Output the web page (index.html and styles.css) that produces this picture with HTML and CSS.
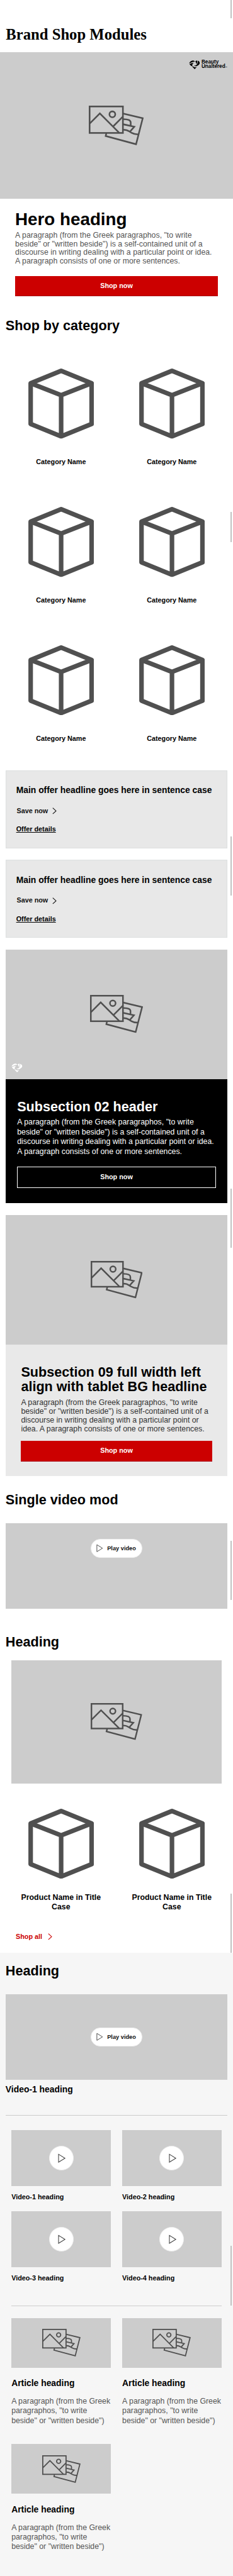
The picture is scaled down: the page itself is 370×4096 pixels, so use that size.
FILE: index.html
```html
<!DOCTYPE html>
<html lang="en">
<head>
<meta charset="utf-8">
<title>Brand Shop Modules</title>
<link rel="stylesheet" href="styles.css">
</head>
<body>
<svg class="sprite" aria-hidden="true">
  <symbol id="photos" viewBox="40 55 338 242" preserveAspectRatio="none">
    <g fill="none" stroke="#505050" stroke-width="10">
      <rect x="45" y="60" width="205" height="162"/>
      <path d="M46 164 108 102 228 222M190 182 250 122"/>
      <circle cx="185" cy="108" r="18"/>
      <path d="M250 103 372 132 331 291 144 241 148 224"/>
      <path d="M252 138C280 138 298 142 298 158V176M252 169 320 184 295 212M252 202C285 202 285 213 303 221C315 228 330 232 348 231"/>
    </g>
  </symbol>
  <symbol id="cube" viewBox="0 0 135 144.5">
    <path d="M67.5 4.8 130.2 30.2V114.3L67.5 139.7 4.8 114.3V30.2ZM4.8 30.2 67.5 54.8 130.2 30.2M67.5 54.8V139.7" fill="none" stroke="#505050" stroke-width="9.4" stroke-linejoin="round"/>
  </symbol>
  <symbol id="heart" viewBox="0 0 23 19">
    <path fill="currentColor" d="M.3 6.8C.8 3 4.8 0 9 .3 10.8.6 11.8 1.5 12.6 2.8 9 3.2 5 4 .3 6.8Z"/>
    <path fill="currentColor" d="M.8 8C4 6 7.5 5 9.6 5.5 7.2 6.8 6.6 8.8 7 11.6L5.5 12.2C3.5 10.8 1.5 9.5.8 8Z"/>
    <path fill="currentColor" d="M13.3 2.6C13.5 1.4 15 .2 17 .3 17.6 3 17.5 6 15.6 8.2 15.5 5.8 14.6 4 13.3 2.6Z"/>
    <path fill="currentColor" d="M18.3.6C21 1.3 23.3 4 22.7 6.6 21.5 9.2 18 11.8 14.8 12.3 12.5 12.5 11 11.6 10.3 10.6 14.5 11.8 19 8.5 18.3.6Z"/>
    <path fill="currentColor" d="M6.4 12.9 8.3 12.3C9.3 14 11.5 14.9 14.2 14.5 15.3 14.3 16 14 16.6 13.8L11.8 18.7Z"/>
  </symbol>
  <symbol id="chevron" viewBox="0 0 9 14">
    <path d="M1 .8 7.8 7 1 13.2" fill="none" stroke="currentColor" stroke-width="1.4"/>
  </symbol>
  <symbol id="play" viewBox="0 0 15 18">
    <path d="M1.2 1.3 13.6 9 1.2 16.7Z" fill="none" stroke="#444" stroke-width="1.3"/>
  </symbol>
</svg>

<header class="page-head"><h1>Brand Shop Modules</h1></header>

<section class="hero">
  <div class="photo photo-hero">
    <svg class="photo-icon icon-hero"><use href="#photos"/></svg>
    <div class="brand"><svg class="heart"><use href="#heart"/></svg><span class="brand-name">Beauty<br>Unaltered<small>™</small></span></div>
  </div>
  <div class="hero-copy">
    <h2>Hero heading</h2>
    <p>A paragraph (from the Greek paragraphos, "to write beside" or "written beside") is a self-contained unit of a discourse in writing dealing with a particular point or idea. A paragraph consists of one or more sentences.</p>
    <a class="btn">Shop now</a>
  </div>
</section>

<section class="categories">
  <h2 class="title">Shop by category</h2>
  <div class="cat-grid">
    <div class="cat"><svg class="cube"><use href="#cube"/></svg><span>Category Name</span></div>
    <div class="cat"><svg class="cube"><use href="#cube"/></svg><span>Category Name</span></div>
    <div class="cat"><svg class="cube"><use href="#cube"/></svg><span>Category Name</span></div>
    <div class="cat"><svg class="cube"><use href="#cube"/></svg><span>Category Name</span></div>
    <div class="cat"><svg class="cube"><use href="#cube"/></svg><span>Category Name</span></div>
    <div class="cat"><svg class="cube"><use href="#cube"/></svg><span>Category Name</span></div>
  </div>
</section>

<section class="offers">
  <div class="offer">
    <h3>Main offer headline goes here in sentence case</h3>
    <a class="save">Save now<svg class="chevron"><use href="#chevron"/></svg></a>
    <a class="details">Offer details</a>
  </div>
  <div class="offer">
    <h3>Main offer headline goes here in sentence case</h3>
    <a class="save">Save now<svg class="chevron"><use href="#chevron"/></svg></a>
    <a class="details">Offer details</a>
  </div>
</section>

<section class="sub sub-dark">
  <div class="photo photo-sub">
    <svg class="photo-icon icon-dark"><use href="#photos"/></svg>
    <svg class="heart heart-white"><use href="#heart"/></svg>
  </div>
  <div class="sub-copy">
    <h2>Subsection 02 header</h2>
    <p>A paragraph (from the Greek paragraphos, "to write beside" or "written beside") is a self-contained unit of a discourse in writing dealing with a particular point or idea. A paragraph consists of one or more sentences.</p>
    <a class="btn-outline">Shop now</a>
  </div>
</section>

<section class="sub sub-light">
  <div class="photo photo-sub"><svg class="photo-icon icon-sub"><use href="#photos"/></svg></div>
  <div class="sub-copy">
    <h2>Subsection 09 full width left align with tablet BG headline</h2>
    <p>A paragraph (from the Greek paragraphos, "to write beside" or "written beside") is a self-contained unit of a discourse in writing dealing with a particular point or idea. A paragraph consists of one or more sentences.</p>
    <a class="btn">Shop now</a>
  </div>
</section>

<section class="single-video">
  <h2 class="title">Single video mod</h2>
  <div class="video video-top"><a class="pill"><svg class="play"><use href="#play"/></svg>Play video</a></div>
</section>

<section class="products">
  <h2 class="title">Heading</h2>
  <div class="photo photo-products"><svg class="photo-icon icon-products"><use href="#photos"/></svg></div>
  <div class="product-grid">
    <div class="product"><svg class="cube"><use href="#cube"/></svg><span>Product Name in Title Case</span></div>
    <div class="product"><svg class="cube"><use href="#cube"/></svg><span>Product Name in Title Case</span></div>
  </div>
  <a class="shop-all">Shop all<svg class="chevron"><use href="#chevron"/></svg></a>
</section>

<section class="media">
  <h2 class="title">Heading</h2>
  <div class="video"><a class="pill"><svg class="play"><use href="#play"/></svg>Play video</a></div>
  <h3 class="video-title">Video-1 heading</h3>
  <hr>
  <div class="tiles">
    <div class="tile"><div class="thumb"><a class="disc"><svg><use href="#play"/></svg></a></div><h4>Video-1 heading</h4></div>
    <div class="tile"><div class="thumb"><a class="disc"><svg><use href="#play"/></svg></a></div><h4>Video-2 heading</h4></div>
    <div class="tile"><div class="thumb"><a class="disc"><svg><use href="#play"/></svg></a></div><h4>Video-3 heading</h4></div>
    <div class="tile"><div class="thumb"><a class="disc"><svg><use href="#play"/></svg></a></div><h4>Video-4 heading</h4></div>
  </div>
  <hr class="inset">
  <div class="articles">
    <article><div class="photo photo-article"><svg class="photo-icon icon-article"><use href="#photos"/></svg></div><h3>Article heading</h3><p>A paragraph (from the Greek paragraphos, "to write beside" or "written beside")</p></article>
    <article><div class="photo photo-article"><svg class="photo-icon icon-article"><use href="#photos"/></svg></div><h3>Article heading</h3><p>A paragraph (from the Greek paragraphos, "to write beside" or "written beside")</p></article>
    <article><div class="photo photo-article"><svg class="photo-icon icon-article"><use href="#photos"/></svg></div><h3>Article heading</h3><p>A paragraph (from the Greek paragraphos, "to write beside" or "written beside")</p></article>
  </div>
</section>

<!-- scroll thumbs laid over the right edge of the page -->
<i class="thumb-bar bar-1"></i>
<i class="thumb-bar bar-2"></i>
<i class="thumb-bar bar-3"></i>
<i class="thumb-bar bar-4"></i>
<i class="thumb-bar bar-5"></i>
<i class="thumb-bar bar-6"></i>
<i class="thumb-bar bar-7"></i>
</body>
</html>
```

FILE: styles.css
```css
* { box-sizing: border-box; }

/* 1rem is one hundred design units */
html { background: #fff; font-size: 77.17px; }

body {
  position: relative;
  height: 4096px;
  overflow: hidden;
  margin: 0;
  color: #000;
  font-family: "Liberation Sans", Arial, sans-serif;
  font-size: .16rem;
}

h1, h2, h3, h4, p { margin: 0; }
svg { display: block; flex: none; }
.sprite { position: absolute; width: 0; height: 0; }

/* Header */
.page-head { height: 1.07rem; padding: .53rem .12rem 0; }
.page-head h1 { font: bold .32rem/.36rem "Liberation Serif", "Times New Roman", serif; }

/* Shared pieces */
.title { padding-left: .115rem; font-size: .28rem; line-height: .34rem; }

.photo {
  position: relative;
  display: flex;
  align-items: center;
  justify-content: center;
  background: #ccc;
}
.photo-hero { height: 3.02rem; }
.photo-sub { height: 2.67rem; }
.photo-products { height: 2.542rem; margin: .2rem .235rem 0; }
.photo-article { height: 1.025rem; }
.icon-hero { width: 1.13rem; height: .815rem; }
.icon-dark { width: 1.09rem; height: .785rem; }
.icon-sub { width: 1.07rem; height: .77rem; }
.icon-products { width: 1.06rem; height: .76rem; }
.icon-article { width: .79rem; height: .57rem; }

.cube { width: 1.35rem; height: 1.445rem; }
.heart { width: .23rem; height: .185rem; }
.chevron { width: .09rem; height: .14rem; }

.btn {
  display: block;
  height: .42rem;
  border-bottom: 1px solid #a8000b;
  background: #c00;
  color: #fff;
  font-size: .14rem;
  font-weight: bold;
  line-height: .41rem;
  text-align: center;
}

/* Hero */
.brand {
  position: absolute;
  top: .16rem;
  right: .12rem;
  display: flex;
  align-items: center;
  gap: .035rem;
}
.brand-name { font-size: .106rem; font-weight: bold; line-height: .092rem; }
.brand-name small { font-size: .04rem; }
.hero-copy { padding: .22rem .312rem 0; }
.hero-copy h2 { font-size: .36rem; line-height: .42rem; }
.hero-copy p { margin: .035rem 0 .205rem; color: #555; font-size: .16rem; line-height: .18rem; }

/* Categories */
.categories { padding-top: .43rem; }
.cat-grid {
  display: grid;
  grid-template-columns: 2.28rem 2.28rem;
  grid-auto-rows: 2.85rem;
  margin: .12rem 0 .32rem .115rem;
}
.cat { display: flex; flex-direction: column; align-items: center; padding-top: .596rem; }
.cat span { margin-top: .395rem; font-size: .14rem; font-weight: bold; line-height: .18rem; }

/* Offers */
.offers { display: grid; gap: .24rem; margin: 0 .115rem; }
.offer {
  height: 1.608rem;
  padding: .295rem .205rem 0;
  border: 1px solid #dcdfdf;
  background: #e8e8e8;
  font-size: .14rem;
  font-weight: bold;
  line-height: .18rem;
}
.offer h3 { font-size: .18rem; line-height: .22rem; white-space: nowrap; }
.save { display: flex; align-items: center; gap: .09rem; margin: .225rem 0 .2rem .01rem; color: #111; }
.details { text-decoration: underline; }

/* Sub sections */
.sub { margin: .24rem .115rem 0; }
.sub-dark .sub-copy { height: 2.56rem; padding: .41rem .238rem 0; background: #000; color: #fff; }
.sub-dark h2 { font-size: .28rem; line-height: .34rem; }
.sub-dark p { margin: .047rem 0 .203rem; font-size: .16rem; line-height: .2rem; }
.heart-white { position: absolute; left: .12rem; bottom: .135rem; color: #fff; }
.btn-outline {
  display: block;
  height: .44rem;
  border: .02rem solid #fff;
  font-size: .14rem;
  font-weight: bold;
  line-height: .4rem;
  text-align: center;
}
.sub-light { background: #e9e9e9; }
.sub-light .sub-copy { height: 2.71rem; padding: .413rem .318rem 0; }
.sub-light h2 { font-size: .28rem; line-height: .3rem; }
.sub-light p { margin: .107rem 0 .148rem; color: #333; font-size: .16rem; line-height: .18rem; }

/* Video */
.single-video { padding-top: .33rem; }
.video {
  display: flex;
  align-items: center;
  justify-content: center;
  height: 1.765rem;
  margin: .3rem .115rem 0;
  background: #ccc;
}
.video-top { align-items: flex-start; padding-top: .325rem; }
.pill {
  display: flex;
  align-items: center;
  width: 1.07rem;
  height: .39rem;
  padding-left: .105rem;
  gap: .085rem;
  border: .02rem solid #f0f0f0;
  border-radius: .2rem;
  background: #fff;
  color: #111;
  font-size: .12rem;
  font-weight: bold;
  white-space: nowrap;
}
.play { width: .14rem; height: .175rem; }

/* Products */
.products { height: 7.09rem; padding-top: .516rem; }
.product-grid { display: grid; grid-template-columns: 2.28rem 2.28rem; margin: .52rem 0 0 .115rem; }
.product { display: flex; flex-direction: column; align-items: center; }
.product span { width: 1.8rem; margin-top: .295rem; font-size: .16rem; font-weight: bold; line-height: .19rem; text-align: center; }
.shop-all {
  display: flex;
  align-items: center;
  gap: .12rem;
  margin: .435rem 0 0 .325rem;
  color: #c00;
  font-size: .14rem;
  font-weight: bold;
  line-height: .18rem;
}

/* Media */
.media { padding: .21rem 0 .6rem; background: #f6f6f6; }
.video-title { margin: .095rem .115rem 0; font-size: .18rem; line-height: .22rem; }
hr { height: 1px; margin: .41rem .115rem .3rem; border: 0; background: #ccc; }
hr.inset { margin: .47rem .235rem .24rem; }
.tiles, .articles { display: grid; grid-template-columns: 2.045rem 2.045rem; column-gap: .235rem; margin: 0 .235rem; }
.tiles { row-gap: .19rem; }
.thumb { display: flex; align-items: center; justify-content: center; height: 1.15rem; background: #ccc; }
.disc {
  display: flex;
  align-items: center;
  justify-content: center;
  width: .505rem;
  height: .505rem;
  padding-left: .04rem;
  border: 1px solid #eee;
  border-radius: 50%;
  background: #fff;
}
.disc svg { width: .16rem; height: .2rem; }
.tile h4 { margin-top: .15rem; font-size: .14rem; line-height: .18rem; }
.articles { row-gap: .375rem; }
.articles h3 { margin-top: .213rem; font-size: .18rem; line-height: .22rem; }
.articles p { margin-top: .165rem; margin-right: -.02rem; color: #555; font-size: .16rem; line-height: .2rem; }

/* Scroll thumbs */
.thumb-bar { position: absolute; right: .025rem; width: .032rem; height: 1.22rem; background: #c1c1c1; }
.bar-1 { top: 0; height: .38rem; }
.bar-2 { top: 10.55rem; height: .625rem; }
.bar-3 { top: 17.23rem; }
.bar-4 { top: 24.49rem; }
.bar-5 { top: 31.75rem; }
.bar-6 { top: 39.02rem; }
.bar-7 { top: 46.28rem; }
```
